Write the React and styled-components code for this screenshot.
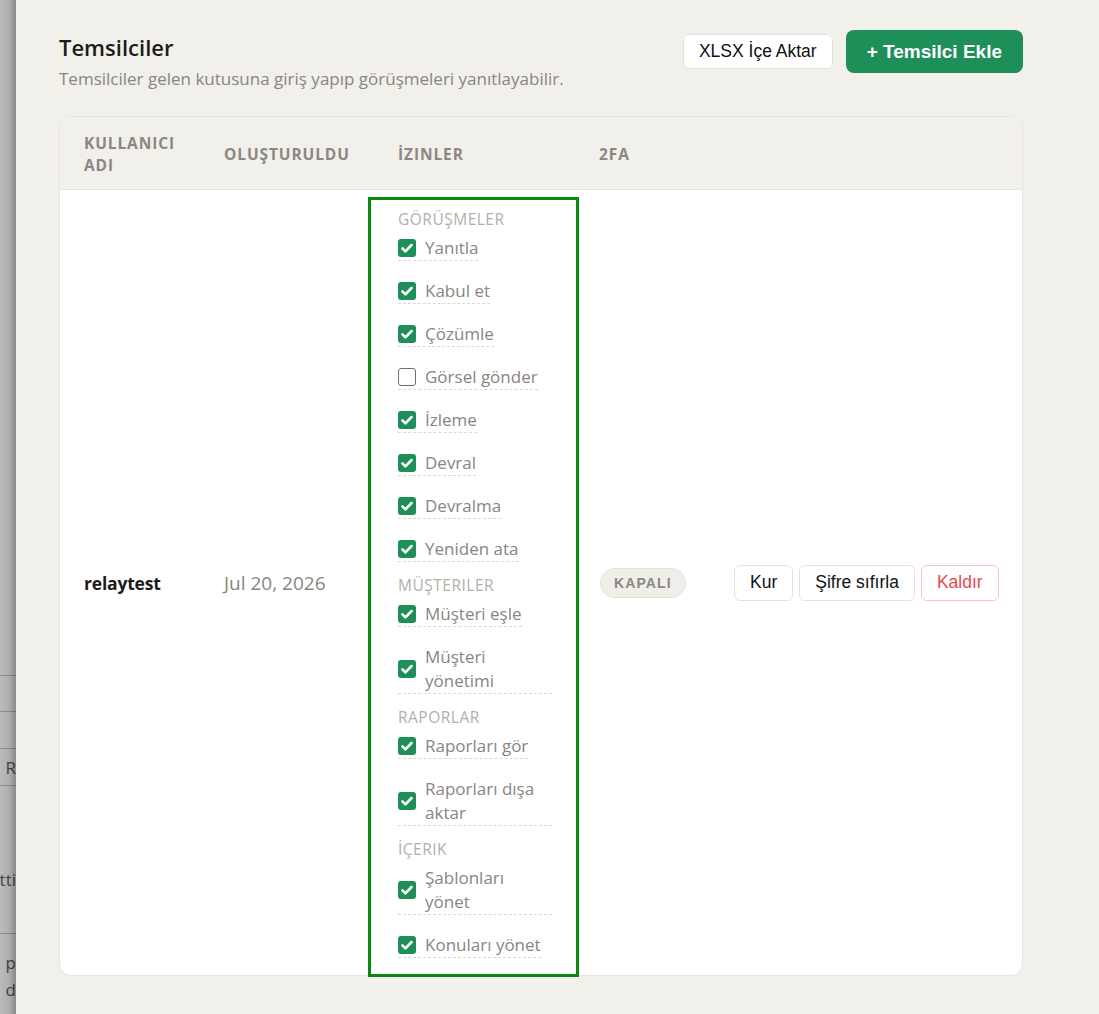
import React from 'react'
import styled, { createGlobalStyle } from 'styled-components'

const GlobalStyle = createGlobalStyle`
    html, body {
        margin: 0;
        padding: 0;
        background: #f1f0eb;
    }
    body {
        font-family: "Open Sans", "Noto Sans", sans-serif;
    }
    * {
        box-sizing: border-box;
    }
`

const Shell = styled.div`
    display: flex;
    min-height: 100vh;
`

const Backdrop = styled.div`
    position: relative;
    width: 16px;
    flex: 0 0 16px;
    overflow: hidden;
    background: #fafafa;
    display: flex;
    flex-direction: column;

    &::after {
        content: '';
        position: absolute;
        inset: 0;
        background: linear-gradient(to right, rgba(0, 0, 0, 0.25), rgba(0, 0, 0, 0.3) 55%, rgba(0, 0, 0, 0.45));
    }
`

const BackRow = styled.div`
    height: ${p => p.$h}px;
    flex: 0 0 auto;
    display: flex;
    flex-direction: column;
    justify-content: ${p => p.$align || 'center'};
    align-items: flex-end;
    border-bottom: ${p => (p.$line ? '1px solid #bdbdbd' : 'none')};
    color: #5e5e5e;
    font-size: 17px;
    line-height: 27px;
    white-space: nowrap;
`

const Drawer = styled.main`
    flex: 1;
    padding: 30px 76px 0 43px;
    background: #f1f0eb;
`

const Head = styled.header`
    display: flex;
    justify-content: space-between;
    align-items: flex-start;
    margin-bottom: 26px;
`

const TitleBlock = styled.div`
    padding-top: 2px;
`

const Title = styled.h1`
    margin: 0;
    font-size: 22px;
    line-height: 30px;
    font-weight: 600;
    color: #1c1b19;
`

const Subtitle = styled.p`
    margin: 6px 0 0;
    font-size: 17px;
    line-height: 22px;
    color: #8a8580;
`

const HeadActions = styled.div`
    display: flex;
    align-items: center;
    gap: 13px;
`

const Button = styled.button`
    font-family: "Liberation Sans", Arial, sans-serif;
    font-size: 17.5px;
    white-space: nowrap;
    flex: 0 0 auto;
    height: ${p => p.$h || 36}px;
    padding: 0 15px;
    background: #fff;
    color: ${p => (p.$danger ? '#e5484d' : '#111')};
    border: 1px solid ${p => (p.$danger ? '#f6c4c6' : '#e4e2dc')};
    border-radius: 6px;
    cursor: pointer;
`

const PrimaryButton = styled.button`
    font-family: "Liberation Sans", Arial, sans-serif;
    font-size: 19px;
    font-weight: 700;
    white-space: nowrap;
    height: 43px;
    padding: 0 21px;
    background: #1f8f5a;
    color: #fff;
    border: none;
    border-radius: 8px;
    cursor: pointer;
`

const Card = styled.section`
    background: #fff;
    border: 1px solid #e6e4dd;
    border-radius: 12px;
`

const Table = styled.table`
    width: 100%;
    border-collapse: separate;
    border-spacing: 0;
    table-layout: fixed;
`

const Th = styled.th`
    padding: 15px 24px 13px ${p => p.$pl || 24}px;
    background: #f1f0eb;
    border-bottom: 1px solid #e6e4dd;
    text-align: left;
    font-size: 15.5px;
    line-height: 22px;
    font-weight: 700;
    letter-spacing: 0.9px;
    color: #8d8781;
    text-transform: uppercase;

    &:first-child {
        border-top-left-radius: 12px;
    }
    &:last-child {
        border-top-right-radius: 12px;
    }
`

const Td = styled.td`
    padding: 0 24px 0 ${p => p.$pl || 24}px;
    vertical-align: middle;
    font-size: ${p => (p.$strong ? 17.5 : 19)}px;
    letter-spacing: ${p => (p.$strong ? '-0.2px' : 'normal')};
    color: ${p => (p.$strong ? '#1b1b1a' : '#8a8580')};
    font-weight: ${p => (p.$strong ? 700 : 400)};
`

const PermCell = styled.td`
    padding: 7px 0 0;
    vertical-align: top;
`

const PermBox = styled.div`
    border: 3px solid #0a8a0a;
    margin-bottom: -2px;
    padding: 9px 20px 16px 27px;
    display: flex;
    flex-direction: column;
    gap: 13px;
`

const Group = styled.div`
    display: flex;
    flex-direction: column;
    align-items: flex-start;
`

const GroupTitle = styled.div`
    font-size: 15.5px;
    line-height: 20px;
    letter-spacing: 0.5px;
    color: #b3afa9;
    text-transform: uppercase;
    margin-bottom: 7px;
`

const Items = styled.div`
    display: flex;
    flex-direction: column;
    align-items: flex-start;
    gap: 18px;
`

const Perm = styled.label`
    display: inline-flex;
    align-items: center;
    gap: 9px;
    max-width: 154px;
    border-bottom: 1px dashed #dcd9d3;
    font-size: 17px;
    line-height: 24px;
    color: #8a8580;
    cursor: pointer;
`

const Box = styled.span`
    flex: 0 0 18px;
    width: 18px;
    height: 18px;
    border-radius: 3px;
    display: flex;
    align-items: center;
    justify-content: center;
    background: ${p => (p.$on ? '#1f8f5a' : '#fff')};
    border: ${p => (p.$on ? 'none' : '1.5px solid #6f6f6f')};
`

const Badge = styled.span`
    display: inline-block;
    padding: 0 13px;
    height: 30px;
    line-height: 28px;
    border-radius: 15px;
    background: #efeee9;
    border: 1px solid #e3e1da;
    font-family: "Liberation Sans", Arial, sans-serif;
    font-size: 14px;
    font-weight: 700;
    letter-spacing: 1.1px;
    color: #8c8882;
`

const RowActions = styled.div`
    display: flex;
    gap: 6px;
`

const groups = [
    {
        title: 'Görüşmeler',
        items: [
            ['Yanıtla', true],
            ['Kabul et', true],
            ['Çözümle', true],
            ['Görsel gönder', false],
            ['İzleme', true],
            ['Devral', true],
            ['Devralma', true],
            ['Yeniden ata', true],
        ],
    },
    {
        title: 'Müşterıler',
        items: [
            ['Müşteri eşle', true],
            ['Müşteri yönetimi', true],
        ],
    },
    {
        title: 'Raporlar',
        items: [
            ['Raporları gör', true],
            ['Raporları dışa aktar', true],
        ],
    },
    {
        title: 'İçerik',
        items: [
            ['Şablonları yönet', true],
            ['Konuları yönet', true],
        ],
    },
]

const Check = ({ on }) => (
    <Box $on={on}>
        {on && (
            <svg width="14" height="14" viewBox="0 0 16 16">
                <path d="M2.8 8.4l3.4 3.4L13.2 4.6" fill="none" stroke="#fff" strokeWidth="3" strokeLinecap="round" strokeLinejoin="round" />
            </svg>
        )}
    </Box>
)

const App = () => {
    return (
        <>
            <GlobalStyle />
            <Shell>
                <Backdrop>
                    <BackRow $h={676} $line />
                    <BackRow $h={36} $line />
                    <BackRow $h={37} $line />
                    <BackRow $h={37} $line>R</BackRow>
                    <BackRow $h={148} $line $align="flex-end">
                        <span style={{ marginBottom: 40 }}>tti</span>
                    </BackRow>
                    <BackRow $h={80} $align="flex-start">
                        <span style={{ marginTop: 15 }}>p</span>
                        <span>d</span>
                    </BackRow>
                </Backdrop>
                <Drawer>
                    <Head>
                        <TitleBlock>
                            <Title>Temsilciler</Title>
                            <Subtitle>Temsilciler gelen kutusuna giriş yapıp görüşmeleri yanıtlayabilir.</Subtitle>
                        </TitleBlock>
                        <HeadActions>
                            <Button $h={35}>XLSX İçe Aktar</Button>
                            <PrimaryButton>+ Temsilci Ekle</PrimaryButton>
                        </HeadActions>
                    </Head>
                    <Card>
                        <Table>
                            <colgroup>
                                <col style={{ width: 140 }} />
                                <col style={{ width: 168 }} />
                                <col style={{ width: 211 }} />
                                <col style={{ width: 131 }} />
                                <col />
                            </colgroup>
                            <thead>
                                <tr>
                                    <Th>Kullanıcı adı</Th>
                                    <Th>Oluşturuldu</Th>
                                    <Th $pl={30}>İzinler</Th>
                                    <Th $pl={20}>2FA</Th>
                                    <Th />
                                </tr>
                            </thead>
                            <tbody>
                                <tr>
                                    <Td $strong>relaytest</Td>
                                    <Td>Jul 20, 2026</Td>
                                    <PermCell>
                                        <PermBox>
                                            {groups.map(g => (
                                                <Group key={g.title}>
                                                    <GroupTitle>{g.title}</GroupTitle>
                                                    <Items>
                                                        {g.items.map(([name, on]) => (
                                                            <Perm key={name}>
                                                                <Check on={on} />
                                                                <span>{name}</span>
                                                            </Perm>
                                                        ))}
                                                    </Items>
                                                </Group>
                                            ))}
                                        </PermBox>
                                    </PermCell>
                                    <Td $pl={21}>
                                        <Badge>KAPALI</Badge>
                                    </Td>
                                    <Td>
                                        <RowActions>
                                            <Button>Kur</Button>
                                            <Button>Şifre sıfırla</Button>
                                            <Button $danger>Kaldır</Button>
                                        </RowActions>
                                    </Td>
                                </tr>
                            </tbody>
                        </Table>
                    </Card>
                </Drawer>
            </Shell>
        </>
    )
}

export default App
